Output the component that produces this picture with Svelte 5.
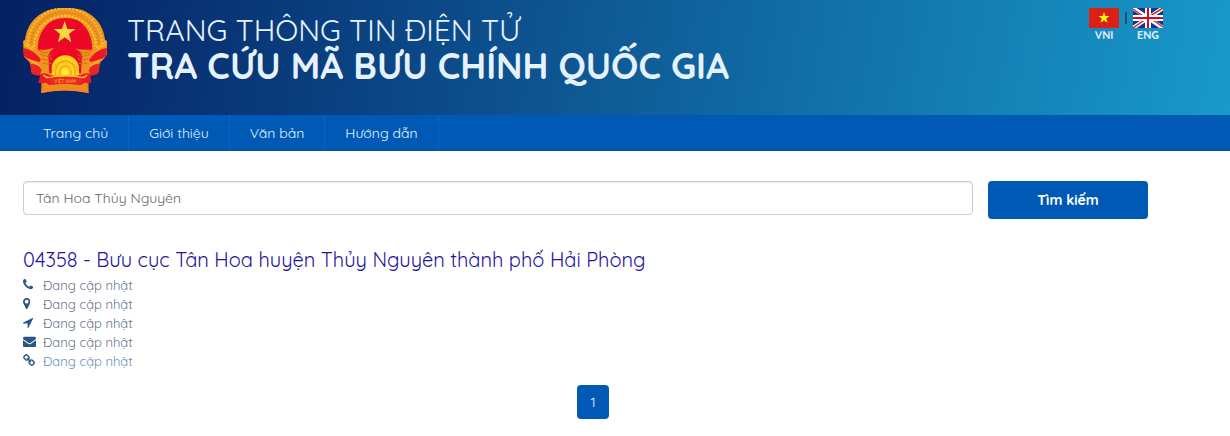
<script>
  let keyword = "Tân Hoa Thủy Nguyên";

  const menu = ["Trang chủ", "Giới thiệu", "Văn bản", "Hướng dẫn"];

  const office = {
    name: "04358 - Bưu cục Tân Hoa huyện Thủy Nguyên thành phố Hải Phòng",
    details: [
      { icon: "phone", text: "Đang cập nhật" },
      { icon: "marker", text: "Đang cập nhật" },
      { icon: "arrow", text: "Đang cập nhật" },
      { icon: "mail", text: "Đang cập nhật" },
      { icon: "link", text: "Đang cập nhật", href: "#website" }
    ]
  };

  // Font Awesome 4 style glyphs, y axis pointing up
  const icons = {
    phone: { width: 1408, path: "M1408 296q0 -27 -10 -70.500t-21 -68.500q-21 -50 -122 -106q-94 -51 -186 -51q-27 0 -53 3.500t-57.500 12.500t-47 14.500t-55.500 20.500t-49 18q-98 35 -175 83q-127 79 -264 216t-216 264q-48 77 -83 175q-3 9 -18 49t-20.500 55.500t-14.500 47t-12.500 57.500t-3.500 53q0 92 51 186q56 101 106 122q25 11 68.500 21t70.500 10q14 0 21 -3q18 -6 53 -76q11 -19 30 -54t35 -63.500t31 -53.500q3 -4 17.500 -25t21.500 -35.500t7 -28.500q0 -20 -28.500 -50t-62 -55t-62 -53t-28.500 -46q0 -9 5 -22.500t8.500 -20.500t14 -24t11.500 -19q76 -137 174 -235t235 -174q2 -1 19 -11.500t24 -14t20.500 -8.500t22.500 -5q18 0 46 28.500t53 62t55 62t50 28.500q14 0 28.500 -7t35.500 -21.500t25 -17.500q25 -15 53.500 -31t63.500 -35t54 -30q70 -35 76 -53q3 -7 3 -21z" },
    marker: { width: 1024, path: "M768 896q0 106 -75 181t-181 75t-181 -75t-75 -181t75 -181t181 -75t181 75t75 181zM1024 896q0 -109 -33 -179l-364 -774q-16 -33 -47.500 -52t-67.500 -19t-67.500 19t-46.500 52l-365 774q-33 70 -33 179q0 212 150 362t362 150t362 -150t150 -362z" },
    arrow: { width: 1408, path: "M1401 1187l-640 -1280q-17 -35 -57 -35q-5 0 -15 2q-22 5 -35.500 22.500t-13.500 39.500v576h-576q-22 0 -39.500 13.500t-22.500 35.500t4 42t29 30l1280 640q13 7 29 7q27 0 45 -19q15 -14 18.500 -34.500t-6.500 -39.500z" },
    mail: { width: 1792, path: "M1792 826v-794q0 -66 -47 -113t-113 -47h-1472q-66 0 -113 47t-47 113v794q44 -49 101 -87q362 -246 497 -345q57 -42 92.500 -65.500t94.500 -48t110 -24.500h2q51 0 110 24.500t94.500 48t92.500 65.500q170 123 498 345q57 39 100 87zM1792 1120q0 -79 -49 -151t-122 -123q-376 -261 -468 -325q-10 -7 -42.500 -30.500t-54 -38t-52 -32.500t-57.500 -27t-50 -9h-2q-23 0 -50 9t-57.500 27t-52 32.500t-54 38t-42.500 30.500q-91 64 -262 182.500t-205 142.500q-62 42 -117 115.500t-55 136.500q0 78 41.500 130t118.500 52h1472q65 0 112.500 -47t47.500 -113z" },
    link: { width: 1664, path: "M1456 320q0 40 -28 68l-208 208q-28 28 -68 28q-42 0 -72 -32q3 -3 19 -18.500t21.500 -21.500t15 -19t13 -25.500t3.500 -27.500q0 -40 -28 -68t-68 -28q-15 0 -27.500 3.500t-25.500 13t-19 15t-21.500 21.500t-18.500 19q-33 -31 -33 -73q0 -40 28 -68l206 -207q27 -27 68 -27q40 0 68 26l147 146q28 28 28 67zM753 1025q0 40 -28 68l-206 207q-28 28 -68 28q-39 0 -68 -27l-147 -146q-28 -28 -28 -67q0 -40 28 -68l208 -208q27 -27 68 -27q42 0 72 31q-3 3 -19 18.500t-21.500 21.500t-15 19t-13 25.500t-3.500 27.500q0 40 28 68t68 28q15 0 27.500 -3.500t25.500 -13t19 -15t21.500 -21.500t18.500 -19q33 31 33 73zM1648 320q0 -120 -85 -203l-147 -146q-83 -83 -203 -83q-121 0 -204 85l-206 207q-83 83 -83 203q0 123 88 209l-88 88q-86 -88 -208 -88q-120 0 -204 84l-208 208q-84 84 -84 204t85 203l147 146q83 83 203 83q121 0 204 -85l206 -207q83 -83 83 -203q0 -123 -88 -209l88 -88q86 88 208 88q120 0 204 -84l208 -208q84 -84 84 -204z" }
  };

  function search(event) {
    event.preventDefault();
  }
</script>

<header>
  <div class="wrap banner">
    <a class="brand" href="#home">
      <svg class="emblem" viewBox="0 0 252 256" aria-hidden="true">
        <path d="M57 188 L54 254 Q126 238 197 254 L196 188 Z" fill="#ee7d18" />
        <path d="M0 98 L6 94 Q14 30 76 5 Q126 -8 178 5 Q238 30 246 94 L252 98 V138 L244 150 L232 162 L222 190 L202 200 H50 L28 190 L20 162 L3 145 Z" fill="#ee9420" />
        <path d="M14 112 A112 112 0 0 1 238 112" fill="none" stroke="#f8bd30" stroke-width="7" stroke-dasharray="6 5" />
        <path d="M24 114 A102 102 0 0 1 228 114" fill="none" stroke="#e0781a" stroke-width="5" stroke-dasharray="4 6" />
        <path d="M33 116 A93 93 0 0 1 219 116" fill="none" stroke="#f8c52e" stroke-width="7" stroke-dasharray="7 4" />
        <path d="M44 124 Q45 62 90 36 Q126 22 164 36 Q207 63 208 124 L183 124 L158 122 Q174 130 177 142 L174 195 H79 L76 142 Q80 128 94 118 L68 124 Z" fill="#ee0828" />
        <path d="M0 119 Q32 124 53 153 L50 161 Q18 155 3 144 Z M252 119 Q220 124 199 153 L202 161 Q234 155 249 144 Z" fill="#ed1528" />
        <path d="M22 166 Q47 166 56 185 L50 202 Q26 200 24 190 Z M230 166 Q206 166 197 185 L202 202 Q224 200 228 190 Z" fill="#ea2523" />
        <path d="M47 125 Q70 142 84 126 M52 137 Q76 150 88 138 M55 151 Q74 158 88 150 M61 164 Q76 170 87 162 M205 125 Q182 142 168 126 M200 137 Q176 150 164 138 M197 151 Q178 158 164 150 M191 164 Q176 170 165 162" fill="none" stroke="#d96710" stroke-width="4" stroke-dasharray="6 3" />
        <path d="M4 101 L34 121 M4 109 L30 125 M248 101 L218 121 M248 109 L222 125 M23 155 L48 172 M229 155 L204 172" stroke="#ffcd26" stroke-width="3" />
        <path d="M125 38 L133 62 L157 62 L138 77 L145 102 L125 87 L105 102 L111 77 L93 62 L117 62 Z" fill="#f8d840" />
        <path d="M86 202 V180 A41 39 0 0 1 168 180 V202 Z" fill="#ffd320" />
        <path d="M89 188 A39 38 0 0 1 165 188" fill="none" stroke="#ef9a1c" stroke-width="5" stroke-dasharray="3 6" />
        <path d="M98 200 V187 A29 29 0 0 1 156 187 V200 M110 200 V190 A17 17 0 0 1 144 190 V200" fill="none" stroke="#f3a418" stroke-width="4" />
        <circle cx="127" cy="192" r="9" fill="#ffee32" />
        <path d="M52 198 Q64 191 79 200 Q127 209 174 200 Q190 190 202 198 L205 223 L190 224 L174 231 Q126 222 79 232 L64 224 L46 224 Z" fill="#ed1726" />
        <path d="M61 200 Q72 212 88 206 Q127 199 167 206 Q183 211 192 200" fill="none" stroke="#ffc32e" stroke-width="5" />
        <path d="M66 222 L79 230 Q126 220 174 230 L187 222 L197 254 Q126 239 54 254 Z" fill="#f18a20" />
        <path d="M76 209 Q126 202 177 209 L172 231 Q126 222 80 231 Z" fill="#e92a22" />
        <text x="126" y="223" text-anchor="middle">VIỆT NAM</text>
      </svg>
      <h1>
        <span>TRANG THÔNG TIN ĐIỆN TỬ</span>
        <strong>TRA CỨU MÃ BƯU CHÍNH QUỐC GIA</strong>
      </h1>
    </a>
    <div class="languages">
      <a href="#vi">
        <svg viewBox="0 0 30 20" aria-hidden="true">
          <path fill="#da2017" d="M0 0h30v20H0z" />
          <path fill="#ff0" d="M15 4l1.400 4.100h4.300l-3.500 2.500 1.300 4.200-3.500-2.600-3.500 2.600 1.300-4.200-3.500-2.500h4.300z" />
        </svg>
        VNI
      </a>
      <span class="divider"></span>
      <a href="#en">
        <svg viewBox="0 0 30 20" aria-hidden="true">
          <path fill="#0b3294" d="M0 0h30v20H0z" />
          <path stroke="#fff" stroke-width="4" d="M0 0l30 20M30 0L0 20" />
          <path stroke="#d52b32" stroke-width="1.500" d="M0 1l13 9M30 0L17 8M30 19L17 10M0 20l13-9" />
          <path stroke="#fff" stroke-width="6" d="M15 0v20M0 10h30" />
          <path stroke="#d00d20" stroke-width="2" d="M15 0v20M0 10h30" />
        </svg>
        ENG
      </a>
    </div>
  </div>
</header>

<nav>
  <div class="wrap menu">
    {#each menu as item}
      <a href="#menu">{item}</a>
    {/each}
  </div>
</nav>

<main class="wrap">
  <form on:submit={search}>
    <input type="text" aria-label="Từ khóa" bind:value={keyword}>
    <button type="submit">Tìm kiếm</button>
  </form>

  <section>
    <h2><a href="#office">{office.name}</a></h2>
    <ul>
      {#each office.details as detail}
        <li>
          <span class="icon">
            <svg viewBox="0 -1536 {icons[detail.icon].width} 1792" aria-hidden="true">
              <path transform="scale(1 -1)" d={icons[detail.icon].path} />
            </svg>
          </span>
          {#if detail.href}
            <a href={detail.href}>{detail.text}</a>
          {:else}
            <span>{detail.text}</span>
          {/if}
        </li>
      {/each}
    </ul>
  </section>

  <div class="pagination">
    <a href="#page-1">1</a>
  </div>
</main>

<style>
:global(body){
    margin:0;
    background:#fff;
    font-family:Quicksand, Inter, "Noto Sans", sans-serif;
    font-size:14px;
    line-height:20px;
}

a{
    text-decoration:none;
}

.wrap{
    margin:0 67px 0 23px;
}

header{
    background:linear-gradient(100deg, #052063 0%, #0b4584 32%, #1899c9 100%);
}

.banner{
    display:flex;
    justify-content:space-between;
    align-items:flex-start;
    min-height:107px;
    padding-top:8px;
}

.brand{
    display:flex;
    gap:20px;
    color:#e6f2ff;
}

.emblem{
    width:84px;
    height:86px;
}

.emblem text{
    font-size:14px;
    font-weight:700;
    fill:#f5952a;
}

h1{
    margin:4px 0 0;
    font-weight:400;
    font-size:30px;
    line-height:36px;
}

h1 span, h1 strong{
    display:block;
}

h1 strong{
    font-size:36px;
    font-weight:700;
}

.languages{
    display:flex;
    gap:6px;
}

.languages a{
    display:flex;
    flex-direction:column;
    align-items:center;
    font-size:11px;
    line-height:14px;
    font-weight:700;
    color:#e6f2ff;
}

.languages svg{
    width:30px;
    height:20px;
}

.divider{
    width:2px;
    height:12px;
    margin-top:4px;
    background:#235172;
}

nav{
    background:#005ab5;
    border-bottom:1px solid #0051a5;
}

.menu{
    display:flex;
}

.menu a{
    padding:9px 20px 7px;
    line-height:19px;
    font-size:14px;
    font-weight:400;
    color:#e6f2ff;
    border-right:1px dotted #0a70dc;
}

form{
    display:flex;
    align-items:flex-start;
    gap:15px;
    padding:30px 15px 0 0;
}

input{
    flex:1;
    box-sizing:border-box;
    min-width:0;
    height:34px;
    padding:6px 12px;
    border:1px solid #ccc;
    border-radius:4px;
    box-shadow:inset 0 1px 1px rgba(0,0,0,0.075);
    font:inherit;
    color:#666;
}

button{
    width:160px;
    height:38px;
    border:none;
    border-radius:4px;
    background:#005ab5;
    color:#fff;
    font:inherit;
    font-weight:700;
    cursor:pointer;
}

h2{
    margin:28px 0 0;
    font-size:20px;
    line-height:26px;
    font-weight:400;
}

h2 a{
    color:#2414a0;
}

ul{
    list-style:none;
    margin:2px 0 0;
    padding:0;
}

li{
    display:flex;
    align-items:center;
    height:19px;
    font-size:13px;
    font-weight:400;
    color:#66758a;
}

li a{
    color:#6a92b8;
}

.icon{
    display:flex;
    width:20px;
}

.icon svg{
    height:13px;
    fill:#2b5682;
}

.pagination{
    display:flex;
    justify-content:center;
    margin-top:15px;
}

.pagination a{
    padding:7px 13px;
    border-radius:4px;
    background:#005ab5;
    color:#e6f2ff;
}
</style>
